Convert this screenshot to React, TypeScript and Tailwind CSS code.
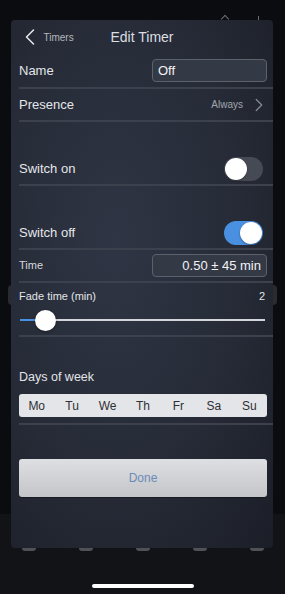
import { ChevronLeft, ChevronRight } from "lucide-react";
import { useState } from "react";

const days = ["Mo", "Tu", "We", "Th", "Fr", "Sa", "Su"];

function Toggle({ on, onClick }: { on: boolean; onClick: () => void }) {
  return (
    <button
      onClick={onClick}
      className={`w-[39px] h-[24px] rounded-full p-[1px] flex ${on ? "bg-[#4a90e0] justify-end" : "bg-[#464a55] justify-start"}`}
    >
      <span className="w-[22px] h-[22px] rounded-full bg-white shadow-[0_1px_2px_rgba(0,0,0,0.35)]" />
    </button>
  );
}

export default function App() {
  const [switchOn, setSwitchOn] = useState(false);
  const [switchOff, setSwitchOff] = useState(true);

  return (
    <div className="relative h-[594px] w-[285px] overflow-hidden bg-[linear-gradient(to_bottom,#0b0c10_514px,#121317_514px)] font-['Liberation_Sans',Arial,sans-serif] text-[#e4e6ea]">
      {/* bits of the view behind the sheet */}
      <span className="absolute left-[222px] top-[16px] w-[6px] h-[6px] border-l border-t border-[#6a6d74] rotate-45" />
      <span className="absolute left-[258px] top-[16px] w-[1px] h-[5px] bg-[#6a6d74]" />
      <span className="absolute left-[8px] top-[285px] w-[4px] h-[20px] rounded-l-full bg-[#2a2b30]" />
      <span className="absolute left-[273px] top-[285px] w-[4px] h-[20px] rounded-r-full bg-[#2a2b30]" />
      <div className="absolute left-0 top-[545px] w-full grid grid-cols-5">
        {[0, 1, 2, 3, 4].map(i => (
          <span key={i} className="mx-auto w-[14px] h-[6px] rounded-full bg-[#4f5157]" />
        ))}
      </div>

      <div className="relative z-10 mt-[20px] ml-[11px] w-[262px] h-[528px] rounded-[4px] bg-[radial-gradient(ellipse_at_40%_42%,#2f3544_0%,#262b37_55%,#1b1e27_100%)] pl-[8px] flex flex-col">
        {/* header */}
        <div className="relative h-[34px] flex items-center pr-[6px]">
          <ChevronLeft size={28} strokeWidth={1.3} className="ml-[-3.5px] text-[#e6e7ea]" />
          <span className="text-[10px] text-[#b4b7be]">Timers</span>
          <span className="absolute left-0 right-[8px] text-center text-[14px] text-[#dcdee2] pointer-events-none">Edit Timer</span>
        </div>

        {/* name */}
        <div className="h-[35px] flex items-center justify-between pr-[6px] border-b-2 border-[#3c414d]">
          <span className="text-[13px]">Name</span>
          <div className="w-[115px] h-[23px] rounded-[4px] border border-[#5c616c] bg-[#343946] flex items-center px-[5px] text-[13px] text-[#f2f2f4]">Off</div>
        </div>

        {/* presence */}
        <div className="h-[33px] flex items-center justify-between pr-[3px] border-b-2 border-[#3c414d]">
          <span className="text-[13px]">Presence</span>
          <div className="flex items-center gap-[5px] text-[10px] text-[#a2a6ae]">
            Always
            <ChevronRight size={22} strokeWidth={1.4} className="text-[#858993]" />
          </div>
        </div>

        <div className="h-[31px]" />

        {/* switch on */}
        <div className="h-[33px] flex items-center justify-between pr-[10px] border-b-2 border-[#3c414d]">
          <span className="text-[13px]">Switch on</span>
          <Toggle on={switchOn} onClick={() => setSwitchOn(v => !v)} />
        </div>

        <div className="h-[31px]" />

        {/* switch off */}
        <div className="h-[33px] flex items-center justify-between pr-[10px] border-b-2 border-[#3c414d]">
          <span className="text-[13px]">Switch off</span>
          <Toggle on={switchOff} onClick={() => setSwitchOff(v => !v)} />
        </div>

        {/* time */}
        <div className="h-[33px] flex items-center justify-between pr-[6px] border-b-2 border-[#3c414d]">
          <span className="text-[11px] text-[#d6d8dc]">Time</span>
          <div className="w-[115px] h-[23px] rounded-[4px] border border-[#5c616c] bg-[#343946] flex items-center justify-end px-[5px] text-[13px] text-[#f2f2f4]">0.50 ± 45 min</div>
        </div>

        {/* fade */}
        <div className="h-[54px] flex flex-col pr-[8px] border-b-2 border-[#3c414d]">
          <div className="mt-[5px] flex justify-between text-[11px] text-[#e2e4e8]">
            <span>Fade time (min)</span>
            <span>2</span>
          </div>
          <div className="relative mt-[5px] ml-[1px] h-[21px] flex items-center">
            <div className="w-[25px] h-[2px] bg-[#4a90e0]" />
            <div className="flex-1 h-[2px] bg-[#d3d5da]" />
            <span className="absolute left-[15px] top-0 w-[21px] h-[21px] rounded-full bg-white shadow-[0_1px_3px_rgba(0,0,0,0.4)]" />
          </div>
        </div>

        {/* days */}
        <div className="h-[88px] flex flex-col justify-end pr-[6px] pb-[6px] border-b-2 border-[#3c414d]">
          <span className="text-[12.5px] text-[#e2e4e8] mb-[7px]">Days of week</span>
          <div className="h-[23px] rounded-[3px] bg-[#e4e5e8] grid grid-cols-7 items-center text-center text-[12px] text-[#2e3034]">
            {days.map(d => (
              <span key={d}>{d}</span>
            ))}
          </div>
        </div>

        {/* done */}
        <div className="pt-[34px] pr-[6px]">
          <button className="w-full h-[38px] rounded-[3px] bg-[linear-gradient(to_bottom,#dedfe2,#c3c5c9)] text-[12px] text-[#6a8bb9] shadow-[0_1px_0_rgba(0,0,0,0.3)]">
            Done
          </button>
        </div>
      </div>

      <div className="mt-[36px] mx-auto w-[102px] h-[4px] rounded-full bg-white" />
    </div>
  );
}
